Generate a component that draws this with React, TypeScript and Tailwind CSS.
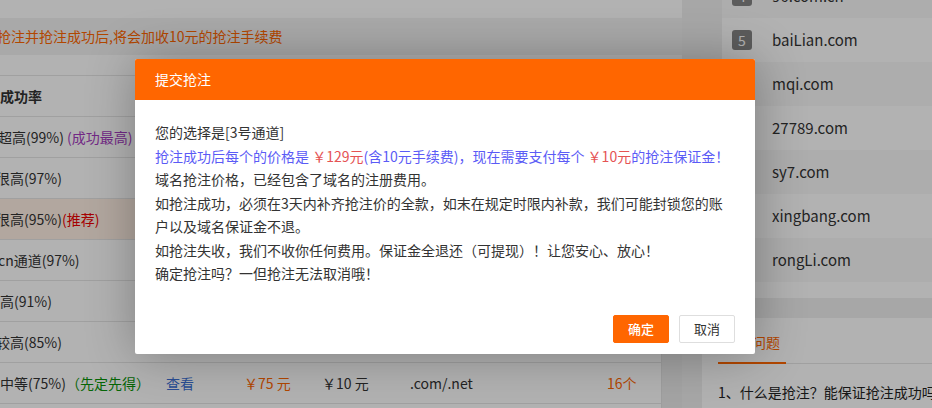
import React from "react";

const rows = [
  {
    first: (
      <span className="-ml-[2px]">
        超高(99%) <span className="text-[#a43bc0]">(成功最高)</span>
      </span>
    ),
    bg: "bg-white",
    last: false,
  },
  { first: <span className="-ml-[4px]">很高(97%)</span>, bg: "bg-white", last: false },
  {
    first: (
      <span className="-ml-[4px]">
        很高(95%)<span className="text-[#ee0000]">(推荐)</span>
      </span>
    ),
    bg: "bg-[#fff0e4]",
    last: false,
  },
  { first: <span className="-ml-[2px]">cn通道(97%)</span>, bg: "bg-white", last: false },
  { first: <span className="ml-0">高(91%)</span>, bg: "bg-white", last: false },
  { first: <span className="-ml-[4px]">较高(85%)</span>, bg: "bg-white", last: false },
  {
    first: (
      <span className="ml-0">
        中等(75%)<span className="text-[#0a930a]">（先定先得）</span>
      </span>
    ),
    bg: "bg-white",
    last: true,
  },
];

const ranks = [
  { n: "4", name: "96.com.cn", badge: true, alt: true },
  { n: "5", name: "baiLian.com", badge: true, alt: false },
  { n: "6", name: "mqi.com", badge: false, alt: true },
  { n: "7", name: "27789.com", badge: false, alt: false },
  { n: "8", name: "sy7.com", badge: false, alt: true },
  { n: "9", name: "xingbang.com", badge: false, alt: false },
  { n: "10", name: "rongLi.com", badge: false, alt: true },
];

const cols = "grid grid-cols-[166px_78px_78px_88px_197px_55px] items-center";

export default function App() {
  return (
    <div className="relative w-[932px] h-[408px] overflow-hidden bg-[#f0f0f0] font-['Microsoft_YaHei','Noto_Sans_CJK_SC',sans-serif] text-[14px] text-[#333]">
      <div className="flex h-full gap-[20px]">
        {/* main column */}
        <div className="w-[682px] shrink-0 bg-white overflow-hidden">
          <div className="h-[18px]" />
          <div className="h-[37px] bg-[#f2f2f2] flex items-center whitespace-nowrap text-[#ff6600]">
            <span className="-ml-[3px]">抢注并抢注成功后,将会加收10元的抢注手续费</span>
          </div>
          <div className="h-[20px]" />
          <div className="flex">
            <div className="w-[662px] shrink-0 border-r border-[#e2e2e2]">
              <div className={`${cols} h-[42px] border-y border-[#e5e5e5] font-bold whitespace-nowrap`}>
                <span>成功率</span>
              </div>
              {rows.map((r, i) => (
                <div
                  key={i}
                  className={`${cols} h-[41px] border-b border-[#e5e5e5] whitespace-nowrap ${r.bg}`}
                >
                  <div className="overflow-visible">{r.first}</div>
                  {r.last && (
                    <>
                      <span className="text-[#3b6fd4]">查看</span>
                      <span className="text-[#ff6600]">￥75 元</span>
                      <span>￥10 元</span>
                      <span>.com/.net</span>
                      <span className="text-[#ff6600]">16个</span>
                    </>
                  )}
                </div>
              ))}
            </div>
            <div className="flex-1 bg-[#ebebeb] h-[400px]" />
          </div>
        </div>

        {/* sidebar */}
        <div className="w-[230px] shrink-0 flex flex-col">
          <div className="ml-[20px] bg-white -mt-[26px] pb-[16px]">
            {ranks.map((r) => (
              <div
                key={r.n}
                className={`h-[44px] flex items-center pl-[10px] ${r.alt ? "bg-[#f8f8f8]" : "bg-white"}`}
              >
                <div className="w-[20px] h-[20px] mr-[20px] shrink-0 flex items-center justify-center">
                  {r.badge && (
                    <span className="w-[20px] h-[20px] rounded-[3px] bg-[#858585] text-white text-[14px] leading-[20px] text-center">
                      {r.n}
                    </span>
                  )}
                </div>
                <span className="text-[15px] text-[#333]">{r.name}</span>
              </div>
            ))}
          </div>
          <div className="mt-[20px] flex-1 bg-white pl-[16px]">
            <div className="flex border-b border-[#e5e5e5] h-[46px]">
              <div className="w-[68px] h-[46px] border-b-2 border-[#ff6600] text-[#ff6600] flex items-center justify-center pt-[4px] -mb-[1px]">
                常见问题
              </div>
            </div>
            <div className="mt-[18px] whitespace-nowrap text-[14px] text-[#222]">
              1、什么是抢注？能保证抢注成功吗？
            </div>
          </div>
        </div>
      </div>

      {/* overlay */}
      <div className="absolute inset-0 bg-black/30" />

      {/* modal */}
      <div className="absolute left-[135px] top-[59px] w-[620px] bg-white rounded-[2px] shadow-[1px_1px_50px_rgba(0,0,0,0.3)] overflow-hidden">
        <div className="h-[41px] bg-[#ff6600] text-white px-[20px] flex items-center text-[14px]">
          提交抢注
        </div>
        <div className="px-[20px] pt-[21px] leading-[23.5px] text-[14px] text-[#333]">
          <p>您的选择是[3号通道]</p>
          <p className="text-[#5b5bf6]">
            抢注成功后每个的价格是 <span className="text-[#e55353]">￥129元</span>(含10元手续费)，现在需要支付每个{" "}
            <span className="text-[#e55353]">￥10元</span>的抢注保证金！
          </p>
          <p>域名抢注价格，已经包含了域名的注册费用。</p>
          <p>如抢注成功，必须在3天内补齐抢注价的全款，如末在规定时限内补款，我们可能封锁您的账户以及域名保证金不退。</p>
          <p>如抢注失收，我们不收你任何费用。保证金全退还（可提现）！让您安心、放心！</p>
          <p>确定抢注吗？一但抢注无法取消哦！</p>
        </div>
        <div className="flex justify-end gap-[10px] px-[20px] pt-[29px] pb-[11px]">
          <button className="w-[56px] h-[28px] rounded-[2px] bg-[#ff6600] border border-[#ff6600] text-white text-[13px] font-medium">
            确定
          </button>
          <button className="w-[56px] h-[28px] rounded-[2px] bg-white border border-[#dedede] text-[#333] text-[13px]">
            取消
          </button>
        </div>
      </div>
    </div>
  );
}
